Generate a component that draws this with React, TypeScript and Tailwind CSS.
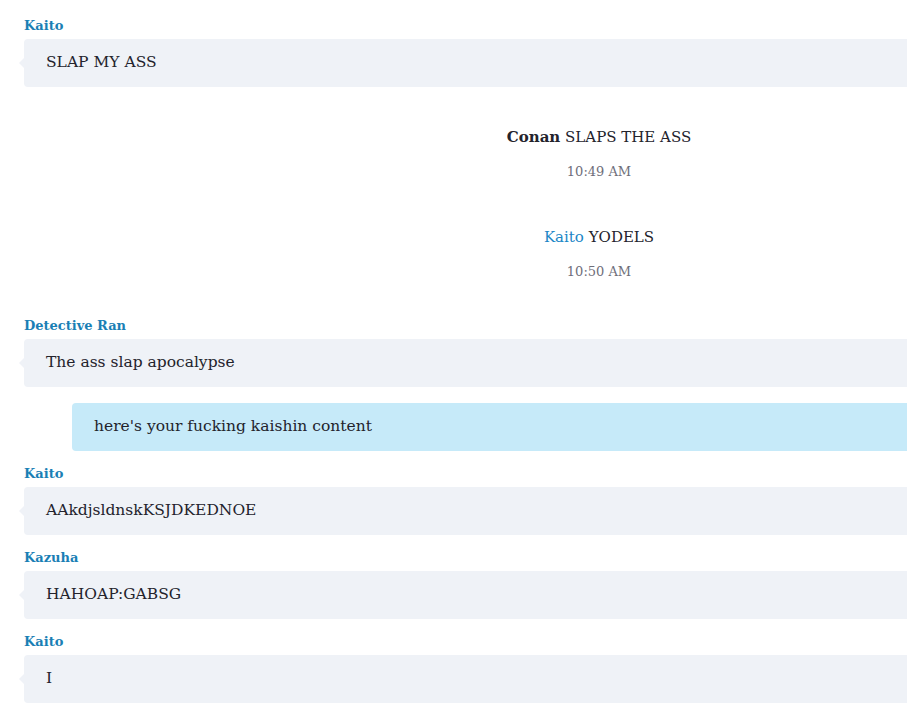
type Msg =
  | { kind: 'user'; name: string; text: string }
  | { kind: 'own'; text: string }
  | { kind: 'system'; actor: string; bold?: boolean; text: string; time: string; first?: boolean }

const messages: Msg[] = [
  { kind: 'user', name: 'Kaito', text: 'SLAP MY ASS' },
  { kind: 'system', actor: 'Conan', bold: true, text: 'SLAPS THE ASS', time: '10:49 AM', first: true },
  { kind: 'system', actor: 'Kaito', text: 'YODELS', time: '10:50 AM' },
  { kind: 'user', name: 'Detective Ran', text: 'The ass slap apocalypse' },
  { kind: 'own', text: "here's your fucking kaishin content" },
  { kind: 'user', name: 'Kaito', text: 'AAkdjsldnskKSJDKEDNOE' },
  { kind: 'user', name: 'Kazuha', text: 'HAHOAP:GABSG' },
  { kind: 'user', name: 'Kaito', text: 'I' },
]

function UserMessage({ name, text, first }: { name: string; text: string; first: boolean }) {
  return (
    <div className={first ? 'pt-[15px]' : 'pt-3'}>
      <div className="h-5 leading-[22px] text-[13px] font-bold text-[#1a7fb5]">{name}</div>
      <div className="relative mt-1 h-12 flex items-center pl-[22px] bg-[#eff2f7] rounded text-[15.5px] text-[#23232c]">
        <span className="absolute -left-[5px] top-1/2 -translate-y-1/2 w-0 h-0 border-y-[5px] border-y-transparent border-r-[5px] border-r-[#eff2f7]" />
        {text}
      </div>
    </div>
  )
}

function OwnMessage({ text }: { text: string }) {
  return (
    <div className="pt-4 pl-12">
      <div className="h-12 flex items-center pl-[22px] bg-[#c6eaf9] rounded text-[15.5px] text-[#23232c]">{text}</div>
    </div>
  )
}

function SystemMessage({ actor, bold, text, time, first }: { actor: string; bold?: boolean; text: string; time: string; first?: boolean }) {
  return (
    <div className={`${first ? 'mt-4' : ''} pt-[22px] pb-[21px] flex flex-col items-center`}>
      <div className="h-6 leading-6 text-[15px] text-[#23232c]">
        {bold ? <span className="font-bold">{actor}</span> : <span className="text-[#1a86c6]">{actor}</span>} {text}
      </div>
      <div className="mt-[13px] h-5 leading-5 text-[13px] text-[#6e6e7a]">{time}</div>
    </div>
  )
}

export default function App() {
  return (
    <div className="w-full min-h-screen bg-white overflow-hidden" style={{ fontFamily: '"DejaVu Serif", serif' }}>
      <div className="w-[1198px] px-6">
        {messages.map((m, i) => {
          if (m.kind === 'user') return <UserMessage key={i} name={m.name} text={m.text} first={i === 0} />
          if (m.kind === 'own') return <OwnMessage key={i} text={m.text} />
          return <SystemMessage key={i} {...m} />
        })}
      </div>
    </div>
  )
}
